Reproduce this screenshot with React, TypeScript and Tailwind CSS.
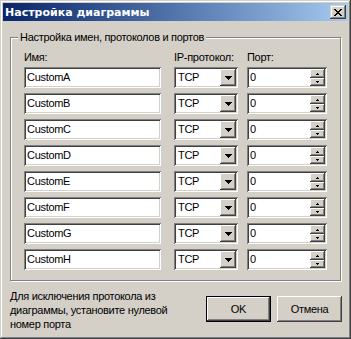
import React from "react";

const raised =
  "shadow-[inset_-1px_-1px_#404040,inset_1px_1px_#ffffff,inset_-2px_-2px_#808080,inset_2px_2px_#d4d0c8]";
const sunken =
  "shadow-[inset_1px_1px_#808080,inset_-1px_-1px_#ffffff,inset_2px_2px_#404040,inset_-2px_-2px_#d4d0c8]";

function CloseGlyph() {
  const rows = [
    "11000011",
    "01100110",
    "00111100",
    "00011000",
    "00111100",
    "01100110",
    "11000011",
  ];
  return (
    <svg width="8" height="7" viewBox="0 0 8 7" shapeRendering="crispEdges">
      {rows.flatMap((r, y) =>
        r.split("").map((c, x) =>
          c === "1" ? <rect key={`${x}-${y}`} x={x} y={y} width="1" height="1" fill="#000" /> : null
        )
      )}
    </svg>
  );
}

function DownTri() {
  return (
    <svg width="7" height="4" viewBox="0 0 7 4" shapeRendering="crispEdges">
      <rect x="0" y="0" width="7" height="1" fill="#000" />
      <rect x="1" y="1" width="5" height="1" fill="#000" />
      <rect x="2" y="2" width="3" height="1" fill="#000" />
      <rect x="3" y="3" width="1" height="1" fill="#000" />
    </svg>
  );
}

function SmallTri({ up }: { up?: boolean }) {
  return (
    <svg width="3" height="2" viewBox="0 0 3 2" shapeRendering="crispEdges">
      {up ? (
        <>
          <rect x="1" y="0" width="1" height="1" fill="#000" />
          <rect x="0" y="1" width="3" height="1" fill="#000" />
        </>
      ) : (
        <>
          <rect x="0" y="0" width="3" height="1" fill="#000" />
          <rect x="1" y="1" width="1" height="1" fill="#000" />
        </>
      )}
    </svg>
  );
}

function Row({ name }: { name: string }) {
  return (
    <div className="flex h-[21px]">
      <div className={`w-[137px] h-[21px] bg-white ${sunken} flex items-center pl-[3px]`}>
        <span className="leading-[13px]">{name}</span>
      </div>
      <div className={`ml-[13px] w-[64px] h-[21px] bg-white ${sunken} flex items-center p-[2px]`}>
        <span className="flex-1 pl-[2px] leading-[13px]">TCP</span>
        <div className={`w-[16px] h-[17px] bg-[#d4d0c8] ${raised} flex items-center justify-center`}>
          <DownTri />
        </div>
      </div>
      <div className={`ml-[9px] w-[80px] h-[21px] bg-white ${sunken} flex items-center p-[2px]`}>
        <span className="flex-1 pl-[1px] leading-[13px]">0</span>
        <div className="w-[15px] h-[17px] flex flex-col">
          <div className={`h-[9px] bg-[#d4d0c8] ${raised} flex items-center justify-center`}>
            <SmallTri up />
          </div>
          <div className={`h-[8px] bg-[#d4d0c8] ${raised} flex items-center justify-center`}>
            <SmallTri />
          </div>
        </div>
      </div>
    </div>
  );
}

export default function App() {
  const names = ["CustomA", "CustomB", "CustomC", "CustomD", "CustomE", "CustomF", "CustomG", "CustomH"];
  return (
    <div
      className="w-[351px] h-[339px] bg-[#d4d0c8] p-[3px] flex flex-col text-black text-[11px] tracking-[-0.3px] shadow-[inset_-1px_-1px_#404040,inset_1px_1px_#d4d0c8,inset_-2px_-2px_#808080,inset_2px_2px_#ffffff]"
      style={{ fontFamily: '"Liberation Sans", Arial, sans-serif' }}
    >
      <div className="h-[18px] shrink-0 flex items-center bg-gradient-to-r from-[#0a246a] to-[#a6caf0] pl-[2px] pr-[2px]">
        <span
          className="text-white font-bold text-[11px] leading-[13px] tracking-normal"
          style={{ fontFamily: '"DejaVu Sans", sans-serif' }}
        >
          Настройка диаграммы
        </span>
        <div
          className={`ml-auto w-[16px] h-[14px] bg-[#d4d0c8] shadow-[inset_-1px_-1px_#404040,inset_1px_1px_#d4d0c8,inset_-2px_-2px_#808080,inset_2px_2px_#ffffff] flex items-center justify-center`}
        >
          <CloseGlyph />
        </div>
      </div>

      <div className="relative mx-[7px] mt-[16px] h-[244px] shrink-0 border border-[#808080] shadow-[inset_1px_1px_#ffffff,1px_1px_#ffffff] pt-[13px] pl-[13px] pb-[10px] flex flex-col">
        <span className="absolute left-[7px] -top-[7px] px-[2px] bg-[#d4d0c8] leading-[13px] whitespace-nowrap">
          Настройка имен, протоколов и портов
        </span>
        <div className="flex h-[13px] leading-[13px]">
          <span className="w-[137px]">Имя:</span>
          <span className="ml-[13px] w-[64px] whitespace-nowrap">IP-протокол:</span>
          <span className="ml-[9px] w-[80px]">Порт:</span>
        </div>
        <div className="mt-[3px] flex flex-col gap-[5px]">
          {names.map((n) => (
            <Row key={n} name={n} />
          ))}
        </div>
      </div>

      <div className="flex">
        <div className="pl-[7px] pt-[8px] leading-[14px] whitespace-nowrap">
          Для исключения протокола из
          <br />
          диаграммы, установите нулевой
          <br />
          номер порта
        </div>
        <div className="ml-auto mr-[6px] mt-[15px] flex gap-[6px]">
          <div className="w-[65px] h-[26px] border border-black">
            <div className={`w-full h-full ${raised} flex items-center justify-center leading-[13px]`}>OK</div>
          </div>
          <div className={`w-[65px] h-[26px] ${raised} flex items-center justify-center leading-[13px]`}>
            Отмена
          </div>
        </div>
      </div>
    </div>
  );
}
